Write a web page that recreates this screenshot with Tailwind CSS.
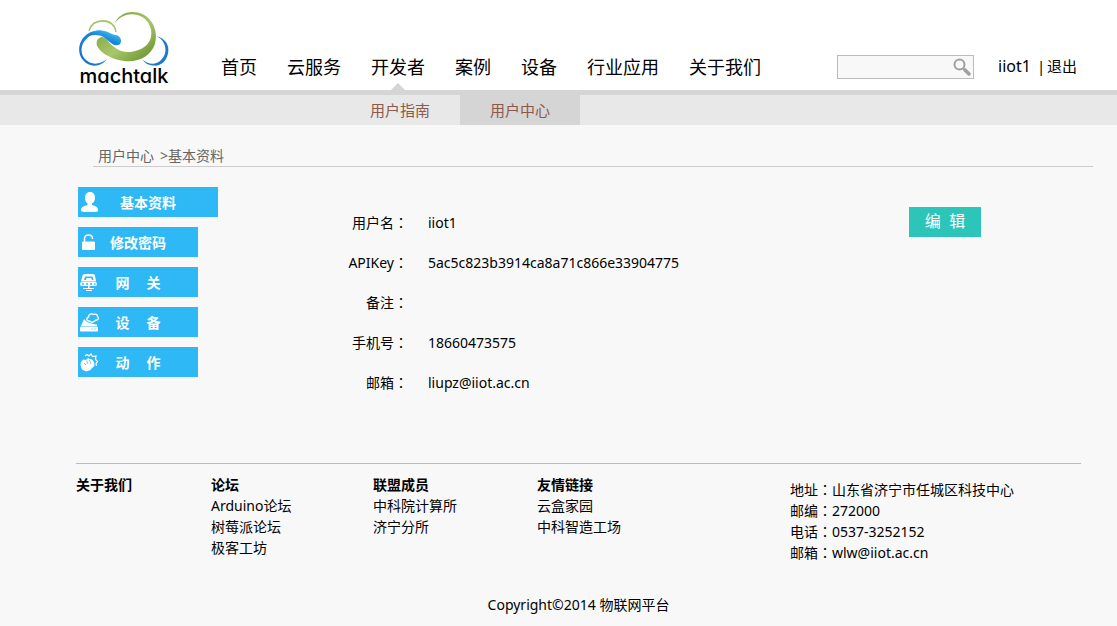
<!DOCTYPE html>
<html lang="zh-CN">
<head>
<meta charset="utf-8">
<title>用户中心 - machtalk</title>
<script src="https://cdn.jsdelivr.net/npm/@tailwindcss/browser@4"></script>
</head>
<body class="min-h-screen bg-[#f8f8f8] text-sm text-black font-['Noto_Sans','Noto_Sans_CJK_SC',sans-serif]">
<header>
  <div class="flex h-[90px] items-end bg-white pl-[76px] pr-10">
    <a href="#" class="relative h-20 w-24 shrink-0">
      <svg class="absolute inset-x-0 top-0 h-[61px] w-24" viewBox="0 0 96 56" preserveAspectRatio="none" fill="none" aria-hidden="true">
        <defs>
          <linearGradient id="blue" x1="0" y1="1" x2="1" y2="0"><stop offset="0" stop-color="#1c62c4"/><stop offset=".5" stop-color="#1787dc"/><stop offset="1" stop-color="#55d2f7"/></linearGradient>
          <linearGradient id="green" x1="0" y1="0" x2="1" y2="1"><stop offset="0" stop-color="#6f9a2b"/><stop offset=".55" stop-color="#a9c66b"/><stop offset="1" stop-color="#5c8b20"/></linearGradient>
        </defs>
        <path d="M13 19C15 13 20 10 27 10C34 10 39 14 40 20" stroke="#a5c35c" stroke-width="1.500"/>
        <path d="M38 13C42 5 50 1 59 2C74 3 83 17 79 31C75 42 63 48 50 47C37 46 25 40 21 33C19 26 26 22 31 27C38 36 47 40 57 38C70 36 77 29 75 18C72 7 63 4 56 4C48 4 42 8 38 13Z" fill="url(#green)"/>
        <path d="M81 24C89 26 94 32 92 40C90 48 84 52 77 51C73 51 69 49 67 46C72 50 80 51 85 46C92 40 91 29 81 24Z" fill="#1b79cf"/>
        <path d="M31 45C25 53 13 53 7 46C0 38 3 26 13 21C20 18 25 18 30 20C23 19 16 21 10 27C4 32 4 41 10 46C16 51 24 50 31 45Z" fill="url(#blue)"/>
        <path d="M9 26C12 20 18 19 25 19C31 19 35 22 39 23C45 23 47 30 43 32C37 34 33 28 28 25C22 22 15 22 9 26Z" fill="url(#blue)"/>
      </svg>
      <span class="absolute inset-x-0 bottom-0 text-center text-xl leading-7 font-medium font-['Inter',sans-serif] [font-feature-settings:'cv11']">machtalk</span>
    </a>
    <nav class="ml-[49px] flex gap-[30px] text-lg leading-[26px] whitespace-nowrap">
      <a href="#" class="pb-2.5">首页</a>
      <a href="#" class="pb-2.5">云服务</a>
      <a href="#" class="relative pb-2.5">开发者<span class="absolute bottom-0 left-1/2 -translate-x-1/2 border-x-[7px] border-b-[7px] border-x-transparent border-b-[#d5d5d5]"></span></a>
      <a href="#" class="pb-2.5">案例</a>
      <a href="#" class="pb-2.5">设备</a>
      <a href="#" class="pb-2.5">行业应用</a>
      <a href="#" class="pb-2.5">关于我们</a>
    </nav>
    <form class="relative mb-[11px] ml-auto">
      <input type="search" aria-label="搜索" class="block h-6 w-[137px] border border-[#bbb] bg-[#f8f8f8] pl-1 pr-6 outline-none">
      <button type="button" aria-label="搜索" class="absolute top-[3px] right-[3px]">
        <svg class="size-[18px]" viewBox="0 0 18 18" fill="none" stroke="#a0a0a0" aria-hidden="true"><circle cx="6.500" cy="6.500" r="5" stroke-width="2"/><path d="M10.500 10.500L12 12" stroke-width="2"/><path d="M12 12L16 16" stroke-width="3.500" stroke-linecap="round"/></svg>
      </button>
    </form>
    <div class="mb-3 ml-6 flex text-[15px] leading-6 whitespace-nowrap">
      <a href="#" class="text-base">iiot1</a><span class="ml-1.5 w-2 text-center">|</span><a href="#" class="ml-0.5">退出</a>
    </div>
  </div>
  <nav class="flex h-[35px] border-t-[5px] border-[#d5d5d5] bg-[#e8e8e8] pl-[340px] text-[15px] leading-[30px] text-[#8b5a4b]">
    <a href="#" class="w-[120px] text-center">用户指南</a>
    <a href="#" class="w-[120px] bg-[#d5d5d5] text-center">用户中心</a>
  </nav>
</header>
<div class="mt-5 mr-6 ml-[93px] flex gap-1.5 border-b border-[#ccc] pl-[5px] leading-[21px] text-[#666]"><a href="#">用户中心</a><span>&gt;基本资料</span></div>
<main class="mt-5 mr-9 ml-[78px] flex">
  <nav class="flex w-[140px] shrink-0 flex-col gap-2.5 text-center leading-7 font-bold text-white">
    <a href="#" class="flex h-[30px] items-center bg-[#2eb8f5]">
      <svg class="ml-0.5 size-5" viewBox="0 0 20 20" fill="currentColor" aria-hidden="true"><path d="M10 0C6.500 0 5 2.500 5 5.500C5 8.500 6 10.500 7.500 11.500V13C4 14 1 15 1 18V19Q5 21 10 21T18 19V18C18 15 15.500 14 12 13V11.500C14 10.500 15 8.500 15 5.500C15 2.500 13.500 0 10 0Z"/></svg>
      <span class="grow pt-0.5 pr-[22px]">基本资料</span>
    </a>
    <a href="#" class="flex h-[30px] w-[120px] items-center bg-[#2eb8f5]">
      <svg class="ml-0.5 size-5" viewBox="0 0 20 20" fill="none" stroke="currentColor" stroke-width="1.500" aria-hidden="true"><path d="M4.500 10V7C4.500 4 6 3 8.500 3C11 3 12.500 4 12.500 6.500V7"/><path d="M2.500 10H14.500V17.500H2.500Z" fill="currentColor" stroke-width="1"/></svg>
      <span class="grow pt-0.5 pr-[22px]">修改密码</span>
    </a>
    <a href="#" class="flex h-[30px] w-[120px] items-center bg-[#2eb8f5]">
      <svg class="ml-0.5 size-5" viewBox="0 0 20 20" fill="currentColor" aria-hidden="true"><path fill-rule="evenodd" d="M5 2H13Q14.500 2 15 3.500L16 9.500H1L2.500 3.500Q3 2 5 2ZM5 4.500L4 8H6L6.500 6H11L12 8H13.500L12.500 4.500Z"/><path fill-rule="evenodd" d="M2 10H15.500Q17 10 17 12T15.500 14H2Q0 14 0 12T2 10ZM2 11.300V12.700H4V11.300ZM6 11.300V12.700H8V11.300ZM10 11.300V12.700H12V11.300ZM14 11.300V12.700H15.500V11.300Z"/><path d="M8 14H9.500V16H14V17H3V16H8ZM6 18H12V19H6Z"/></svg>
      <span class="grow pt-0.5 pr-[22px]">网<span class="inline-block w-[17px]"></span>关</span>
    </a>
    <a href="#" class="flex h-[30px] w-[120px] items-center bg-[#2eb8f5]">
      <svg class="ml-0.5 size-5" viewBox="0 0 20 20" fill="none" stroke="currentColor" aria-hidden="true"><path d="M9 9C6.500 9 5.800 6 8.500 5C8.500 2 12 1.200 13.500 2.500C16 1.500 18 3 17.500 4.500C19.500 6 18 8.500 16 8L12.500 10.500Z" stroke-width="1.400"/><path d="M4 7L7 10L13 12L17 12.500V14H1Z" fill="currentColor" stroke="none"/><path fill-rule="evenodd" d="M1 14.500H17Q18 14.500 18 16V18.500Q18 19.500 17 19.500H1Q0 19.500 0 18.500V16Q0 14.500 1 14.500ZM11.500 16.500V17.500H12.500V16.500ZM14.500 16.500V17.500H15.500V16.500Z" fill="currentColor" stroke="none"/></svg>
      <span class="grow pt-0.5 pr-[22px]">设<span class="inline-block w-[17px]"></span>备</span>
    </a>
    <a href="#" class="flex h-[30px] w-[120px] items-center bg-[#2eb8f5]">
      <svg class="ml-0.5 size-5" viewBox="0 0 20 20" fill="none" stroke="currentColor" aria-hidden="true"><path d="M5 4L7 2.500L9 4L11 2L12.500 4.500L16 4L15.500 7.500L17.500 9.500L16 11.500L16.500 14" stroke-width="1.200"/><path d="M1 10L3 7.500L6 8L8 6L10 7L12 7.500L14 10L14.500 14L12 16L10.500 18L6 19.500L2 17.500L0.500 13Z" fill="currentColor" stroke="none"/><path d="M6.500 8.500L8 12M9.500 8L11 12M4 11L6 13" stroke="#2eb8f5" stroke-width=".7"/></svg>
      <span class="grow pt-0.5 pr-[22px]">动<span class="inline-block w-[17px]"></span>作</span>
    </a>
  </nav>
  <dl class="grid grow auto-rows-[40px] grid-cols-[190px_1fr] gap-x-5 self-start pt-4 leading-10 [&>dt]:text-right">
    <dt>用户名<span lang="zh-TW" class="leading-none font-['Noto_Sans_CJK_TC',sans-serif]">：</span></dt><dd>iiot1</dd>
    <dt>APIKey<span lang="zh-TW" class="leading-none font-['Noto_Sans_CJK_TC',sans-serif]">：</span></dt><dd>5ac5c823b3914ca8a71c866e33904775</dd>
    <dt>备注<span lang="zh-TW" class="leading-none font-['Noto_Sans_CJK_TC',sans-serif]">：</span></dt><dd></dd>
    <dt>手机号<span lang="zh-TW" class="leading-none font-['Noto_Sans_CJK_TC',sans-serif]">：</span></dt><dd>18660473575</dd>
    <dt>邮箱<span lang="zh-TW" class="leading-none font-['Noto_Sans_CJK_TC',sans-serif]">：</span></dt><dd>liupz@iiot.ac.cn</dd>
  </dl>
  <button type="button" class="mt-5 mr-[100px] h-[30px] w-[72px] shrink-0 bg-[#2dc5ba] pb-0.5 text-base text-white">编&nbsp; 辑</button>
</main>
<footer class="mt-[60px] mr-9 ml-[76px] border-t border-[#bbb] pt-2.5 leading-[21px]">
  <div class="flex whitespace-nowrap">
    <div class="w-[135px]"><h2 class="font-bold">关于我们</h2></div>
    <div class="w-[162px]"><h2 class="font-bold">论坛</h2><ul><li><a href="#">Arduino论坛</a></li><li><a href="#">树莓派论坛</a></li><li><a href="#">极客工坊</a></li></ul></div>
    <div class="w-[164px]"><h2 class="font-bold">联盟成员</h2><ul><li><a href="#">中科院计算所</a></li><li><a href="#">济宁分所</a></li></ul></div>
    <div class="w-[253px]"><h2 class="font-bold">友情链接</h2><ul><li><a href="#">云盒家园</a></li><li><a href="#">中科智造工场</a></li></ul></div>
    <address class="pt-[5px] not-italic">
      <p>地址<span lang="zh-TW" class="leading-none font-['Noto_Sans_CJK_TC',sans-serif]">：</span>山东省济宁市任城区科技中心</p>
      <p>邮编<span lang="zh-TW" class="leading-none font-['Noto_Sans_CJK_TC',sans-serif]">：</span>272000</p>
      <p>电话<span lang="zh-TW" class="leading-none font-['Noto_Sans_CJK_TC',sans-serif]">：</span>0537-3252152</p>
      <p>邮箱<span lang="zh-TW" class="leading-none font-['Noto_Sans_CJK_TC',sans-serif]">：</span>wlw@iiot.ac.cn</p>
    </address>
  </div>
  <p class="mt-[31px] pb-2.5 text-center">Copyright©2014 物联网平台</p>
</footer>
</body>
</html>
